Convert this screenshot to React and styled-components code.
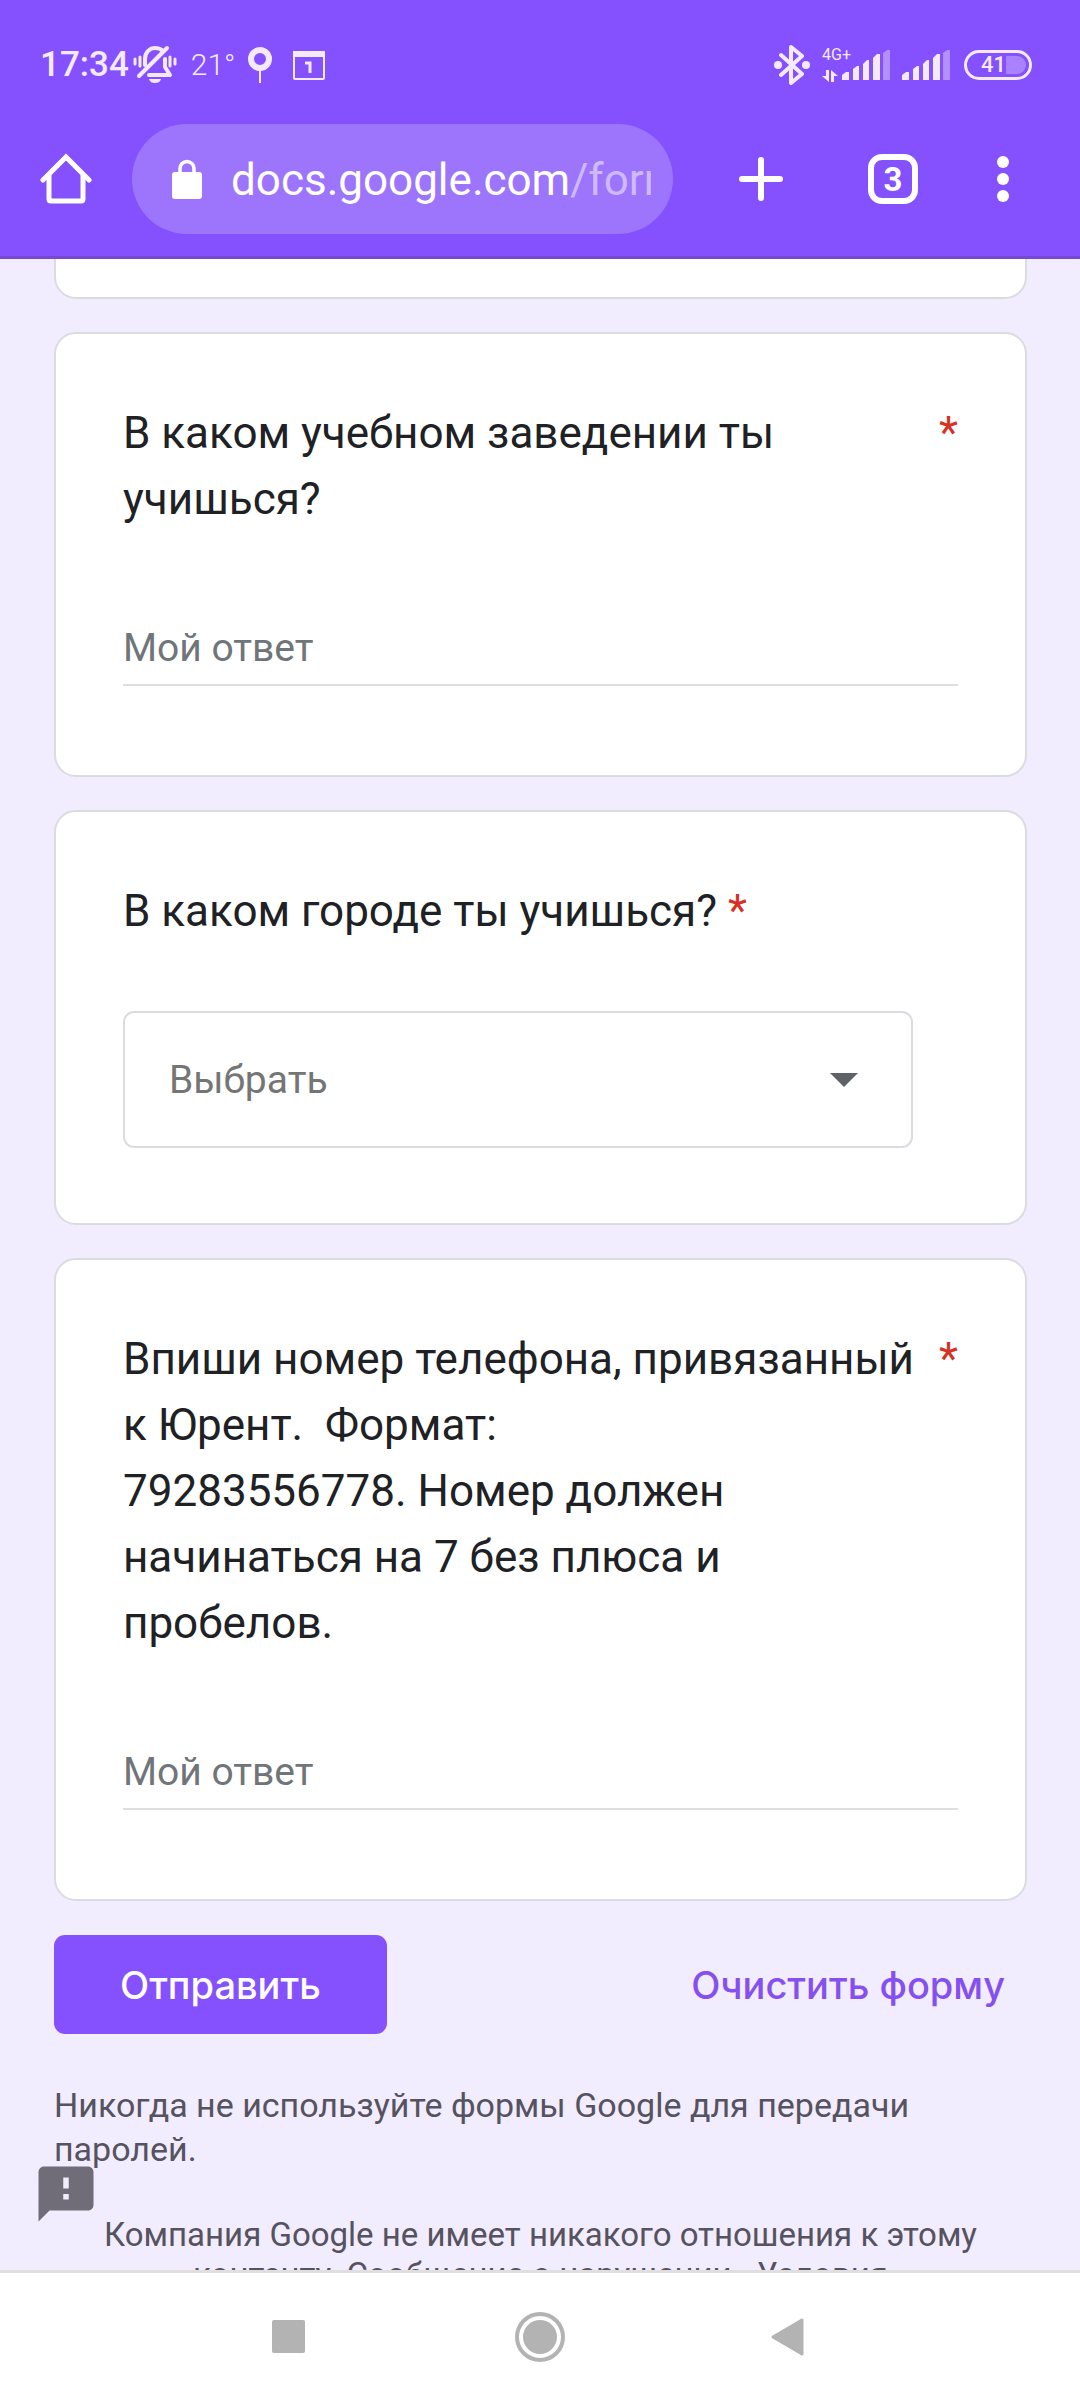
import { useState } from "react"
import styled, { createGlobalStyle } from "styled-components"

const BellOff = () => (
    <svg width="44" height="40" viewBox="0 0 44 40" fill="none" stroke="#f3eaff" strokeLinecap="round">
        <path d="M12 20V14C12 7 17 3 22 3c4 0 6 1 8 3" strokeWidth="4" />
        <path d="M32 14v8l5 8H16" strokeWidth="4" strokeLinejoin="round" />
        <path d="M34 3L6 31" strokeWidth="4" />
        <path d="M16 34h12c-1 3-3 4-6 4s-5-1-6-4z" fill="#f3eaff" stroke="none" />
        <path d="M2 14v5M7 12v9M37 12v9M42 14v5" strokeWidth="3" />
    </svg>
)

const Pin = () => (
    <svg width="24" height="38" viewBox="0 0 24 38" fill="none" stroke="#f3eaff">
        <circle cx="12" cy="13" r="9" strokeWidth="6" />
        <path d="M12 24v13" strokeWidth="2" />
    </svg>
)

const Calendar = () => (
    <svg width="34" height="32" viewBox="0 0 34 32">
        <rect x="2" y="3" width="30" height="27" rx="1" fill="none" stroke="#f3eaff" strokeWidth="2" />
        <path d="M1 2h32v6H1z" fill="#f3eaff" />
        <path d="M13 14h5v10" fill="none" stroke="#f3eaff" strokeWidth="3" />
    </svg>
)

const Bluetooth = () => (
    <svg width="36" height="40" viewBox="0 0 36 40" fill="none" stroke="#f3eaff">
        <path d="M7 10l21 19-11 9V2l11 9L7 30" strokeWidth="4" strokeLinecap="round" strokeLinejoin="round" />
        <circle cx="4" cy="20" r="4" fill="#f3eaff" stroke="none" />
        <circle cx="32" cy="20" r="4" fill="#f3eaff" stroke="none" />
    </svg>
)

const DataArrows = () => (
    <svg width="16" height="12" viewBox="0 0 16 12" fill="#f3eaff">
        <path d="M4 0h3v12L0 6h4zM9 0l7 6h-4v6H9z" />
    </svg>
)

const Signal = () => (
    <svg width="48" height="32" viewBox="0 0 48 32" fill="#f3eaff">
        <path d="M0 26l4-3h3v8H0zM11 20l4-3h2v14h-6zM21 15l4-4h2v20h-6zM31 9l4-4h3v26h-7z" />
        <path d="M41 4l4-3h3v30h-7z" fill="#b38fff" />
    </svg>
)

const Home = () => (
    <svg width="52" height="52" viewBox="0 0 52 52" fill="none" stroke="#fff" strokeWidth="5">
        <path d="M3 27L26 4l23 23" strokeLinecap="round" />
        <path d="M9 22v24q0 2 2 2h30q2 0 2-2V22" />
    </svg>
)

const Lock = () => (
    <svg width="30" height="40" viewBox="0 0 30 40">
        <rect x="0" y="13" width="30" height="27" rx="3" fill="#fff" />
        <path d="M8 14V9.500a7 7 0 0 1 14 0V14" fill="none" stroke="#fff" strokeWidth="3.500" />
    </svg>
)

const Plus = () => (
    <svg width="44" height="44" viewBox="0 0 44 44" stroke="#fff" strokeWidth="6" strokeLinecap="round">
        <path d="M22 3v38M3 22h38" />
    </svg>
)

const Dots = () => (
    <svg width="12" height="46" viewBox="0 0 12 46" fill="#fff">
        <circle cx="6" cy="6" r="6" />
        <circle cx="6" cy="23" r="6" />
        <circle cx="6" cy="40" r="6" />
    </svg>
)

const FeedbackIcon = () => (
    <svg width="66" height="66" viewBox="0 0 24 24" fill="#706d79">
        <path d="M20 2H4c-1.100 0-1.990.9-1.990 2L2 22l4-4h14c1.100 0 2-.9 2-2V4c0-1.100-.9-2-2-2zm-7 12h-2v-2h2v2zm0-4h-2V6h2v4z" />
    </svg>
)

const TextQuestion = ({ id, title }) => {
    const [answer, setAnswer] = useState("")
    return (
        <Card>
            <Row>
                <Label htmlFor={id}>{title}</Label>
                <Required>*</Required>
            </Row>
            <Answer id={id} placeholder="Мой ответ" value={answer} onChange={(e) => setAnswer(e.target.value)} />
        </Card>
    )
}

const App = () => {
    return (
        <Screen>
            <GlobalStyle />
            <Header>
                <StatusBar>
                    <StatusLeft>
                        <Time>17:34</Time>
                        <BellOff />
                        <Degrees>21°</Degrees>
                        <Pin />
                        <Calendar />
                    </StatusLeft>
                    <StatusRight>
                        <Bluetooth />
                        <Mobile>
                            <Network>4G+</Network>
                            <DataArrows />
                        </Mobile>
                        <Signal />
                        <Signal />
                        <Battery>
                            <span>41</span>
                            <Charge />
                        </Battery>
                    </StatusRight>
                </StatusBar>
                <Toolbar>
                    <IconButton aria-label="Главная"><Home /></IconButton>
                    <Address>
                        <Lock />
                        <Url>docs.google.com<Path>/forms</Path></Url>
                    </Address>
                    <IconButton aria-label="Новая вкладка"><Plus /></IconButton>
                    <IconButton aria-label="Вкладки"><Tabs>3</Tabs></IconButton>
                    <IconButton $narrow aria-label="Меню"><Dots /></IconButton>
                </Toolbar>
            </Header>

            <Main>
                <CardEnd />
                <TextQuestion id="school" title="В каком учебном заведении ты учишься?" />
                <Card $compact>
                    <Label htmlFor="city">В каком городе ты учишься? <Required>*</Required></Label>
                    <SelectBox>
                        <Select id="city">
                            <option>Выбрать</option>
                        </Select>
                        <Arrow width="28" height="14" viewBox="0 0 28 14">
                            <path d="M0 0h28L14 14z" fill="#5f6368" />
                        </Arrow>
                    </SelectBox>
                </Card>
                <TextQuestion
                    id="phone"
                    title={"Впиши номер телефона, привязанный к Юрент.\u00a0 Формат: 79283556778.\u00a0Номер должен начинаться на 7 без плюса и пробелов."}
                />
                <Actions>
                    <Submit>Отправить</Submit>
                    <Clear>Очистить форму</Clear>
                </Actions>
                <Warning>Никогда не используйте формы Google для передачи паролей.</Warning>
                <Legal>
                    Компания Google не имеет никакого отношения к этому контенту. <a href="#report">Сообщение о нарушении</a> - <a href="#terms">Условия</a>
                </Legal>
                <Feedback aria-label="Сообщить о проблеме"><FeedbackIcon /></Feedback>
            </Main>

            <NavBar>
                <NavButton aria-label="Недавние">
                    <svg width="50" height="50" viewBox="0 0 50 50"><rect x="7" y="8" width="33" height="33" rx="2" fill="#b3b3b3" /></svg>
                </NavButton>
                <NavButton aria-label="Домой">
                    <svg width="50" height="50" viewBox="0 0 50 50">
                        <circle cx="25" cy="25" r="23" fill="none" stroke="#b3b3b3" strokeWidth="4" />
                        <circle cx="25" cy="25" r="17" fill="#b3b3b3" />
                    </svg>
                </NavButton>
                <NavButton aria-label="Назад">
                    <svg width="50" height="50" viewBox="0 0 50 50">
                        <path d="M8 25L37 8v34z" fill="#b3b3b3" stroke="#b3b3b3" strokeWidth="3" strokeLinejoin="round" />
                    </svg>
                </NavButton>
            </NavBar>
        </Screen>
    )
}

const GlobalStyle = createGlobalStyle`
* { box-sizing: border-box; }
body {
margin: 0;
background: #f1ecfe;
font-family: Roboto, "Noto Sans", sans-serif;
}
button, input, select {
font-family: inherit;
margin: 0;
}
button {
border: none;
background: none;
padding: 0;
cursor: pointer;
}
svg { display: block; flex: none; }
`;

const Screen = styled.div`
display: flex;
flex-direction: column;
height: 100vh;
overflow: hidden;
`;

const Header = styled.header`
flex: none;
background: #8550fd;
border-bottom: 3px solid #7549d2;
`;

const StatusBar = styled.div`
display: flex;
align-items: center;
justify-content: space-between;
height: 99px;
padding: 30px 48px 0 40px;
color: #f3eaff;
`;

const StatusLeft = styled.div`
display: flex;
align-items: center;
`;

const StatusRight = styled(StatusLeft)`
gap: 12px;
`;

const Time = styled.span`
font-size: 35px;
font-weight: 500;
margin-right: 4px;
`;

const Degrees = styled.span`
width: 57px;
margin-left: 14px;
font-size: 30px;
font-weight: 300;
& + svg { margin-right: 20px; }
`;

const Mobile = styled.div`
display: flex;
flex-direction: column;
align-items: flex-start;
gap: 8px;
width: 8px;
`;

const Network = styled.span`
font-size: 16px;
line-height: 14px;
`;

const Battery = styled.div`
display: flex;
align-items: center;
justify-content: flex-end;
width: 68px;
height: 30px;
margin-left: 2px;
padding-right: 3px;
border: 3px solid #f3eaff;
border-radius: 15px;
font-size: 22px;
font-weight: 500;
`;

const Charge = styled.i`
width: 20px;
height: 18px;
background: #a983ff;
border-radius: 0 9px 9px 0;
`;

const Toolbar = styled.div`
display: flex;
align-items: center;
height: 157px;
padding-right: 33px;
padding-top: 3px;
`;

const IconButton = styled.button`
display: flex;
align-items: center;
justify-content: center;
flex: none;
width: ${(props) => (props.$narrow ? "88px" : "132px")};
height: 110px;
`;

const Address = styled.button`
display: flex;
align-items: center;
flex: 1;
min-width: 0;
height: 110px;
gap: 29px;
padding: 0 22px 0 40px;
margin-right: 22px;
border-radius: 55px;
background: #9d75fc;
`;

const Url = styled.span`
flex: 1;
overflow: hidden;
white-space: nowrap;
text-align: left;
font-size: 44px;
line-height: 55px;
padding-top: 3px;
color: #fff;
`;

const Path = styled.span`
color: #ceb9fd;
`;

const Tabs = styled.span`
display: flex;
align-items: center;
justify-content: center;
width: 50px;
height: 50px;
border: 6px solid #fff;
border-radius: 14px;
color: #fff;
font-size: 33px;
font-weight: 700;
`;

const Main = styled.main`
position: relative;
flex: 1;
min-height: 0;
overflow: hidden;
padding: 0 53px 0 54px;
`;

const Card = styled.section`
background: #fff;
border: 2px solid #dadce0;
border-radius: 22px;
padding: 66px 67px ${(props) => (props.$compact ? "75px" : "89px")};
margin-bottom: 33px;
`;

// bottom edge of the question scrolled under the toolbar
const CardEnd = styled(Card)`
height: 40px;
padding: 0;
border-top: none;
border-radius: 0 0 22px 22px;
`;

const Row = styled.div`
display: flex;
justify-content: space-between;
gap: 20px;
`;

const Label = styled.label`
display: block;
font-size: 44px;
line-height: 66px;
color: #202124;
`;

const Required = styled.span`
font-size: 44px;
line-height: 66px;
color: #d93025;
`;

const Answer = styled.input`
display: block;
width: 100%;
height: 74px;
margin-top: 80px;
padding: 0;
border: none;
border-bottom: 2px solid #dfdfdf;
border-radius: 0;
outline: none;
background: none;
font-size: 39px;
color: #202124;
&::placeholder { color: #70757a; opacity: 1; }
`;

const SelectBox = styled.div`
display: grid;
align-items: center;
margin: 67px 45px 0 0;
`;

const Select = styled.select`
grid-area: 1 / 1;
appearance: none;
width: 100%;
height: 137px;
padding: 0 99px 0 44px;
border: 2px solid #dadce0;
border-radius: 11px;
background: #fff;
font-size: 39px;
color: #757575;
`;

const Arrow = styled.svg`
grid-area: 1 / 1;
justify-self: end;
margin-right: 55px;
pointer-events: none;
`;

const Actions = styled.div`
display: flex;
align-items: center;
justify-content: space-between;
padding-top: 1px;
margin-bottom: 49px;
`;

const Submit = styled.button`
height: 99px;
padding: 0 66px;
border-radius: 11px;
background: #8550fd;
color: #fff;
font-family: Inter, Roboto, sans-serif;
font-size: 38px;
font-weight: 500;
`;

const Clear = styled(Submit)`
padding: 0 22px;
background: none;
color: #8550ef;
`;

const Warning = styled.p`
margin: 0 0 44px;
font-size: 34px;
line-height: 44px;
color: #565360;
`;

const Legal = styled.p`
margin: 0;
padding: 0 44px;
text-align: center;
font-size: 33px;
line-height: 40px;
color: #565360;
a { color: inherit; }
`;

const Feedback = styled.button`
position: absolute;
left: 33px;
bottom: 43px;
`;

const NavBar = styled.nav`
display: flex;
align-items: center;
justify-content: center;
gap: 200px;
flex: none;
height: 130px;
border-top: 3px solid #dfdfdf;
background: #fff;
`;

const NavButton = styled.button`
width: 50px;
height: 50px;
`;

export default App
